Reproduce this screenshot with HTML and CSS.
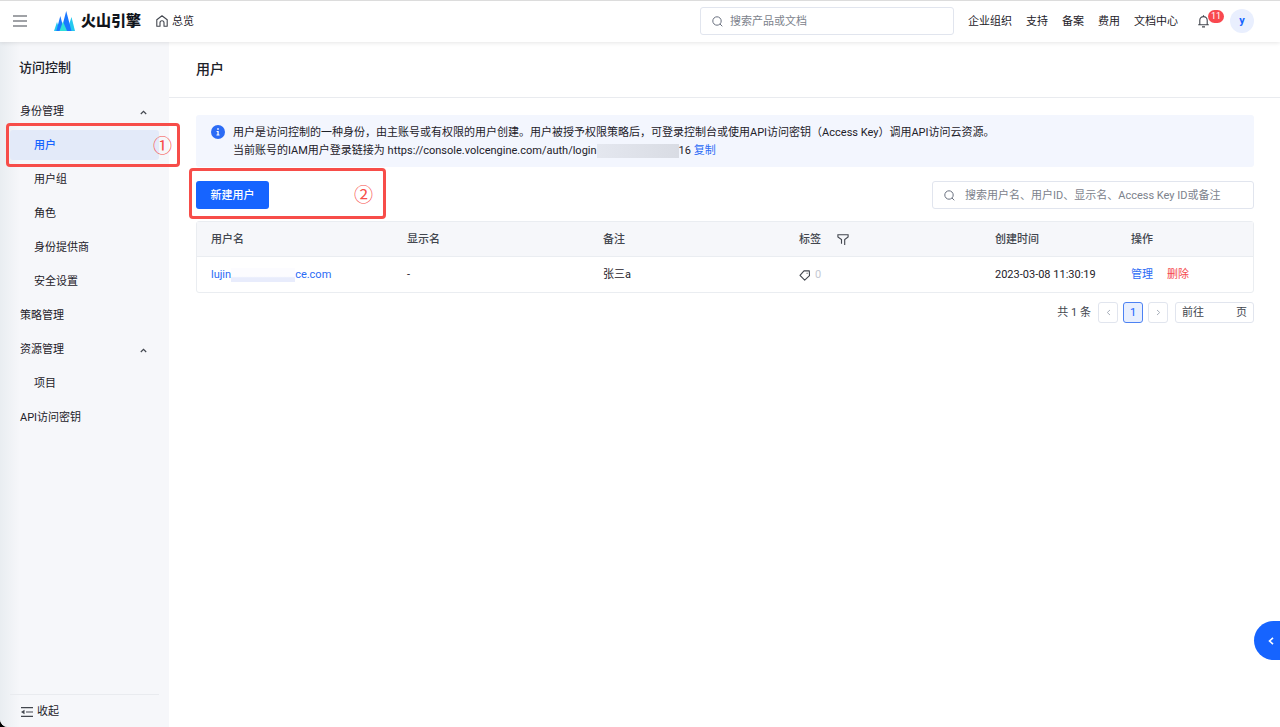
FILE: index.html
```html
<!DOCTYPE html>
<html lang="zh-CN">
<head>
<meta charset="utf-8">
<title>访问控制 - 用户</title>
<link rel="stylesheet" href="styles.css">
</head>
<body>
<div class="app">
  <header class="topbar">
    <button class="icon-btn menu-btn" aria-label="菜单">
      <svg width="14" height="12" viewBox="0 0 14 12" stroke="#42464e" stroke-width="1.2"><path d="M0 1h14M0 6h14M0 11h14"/></svg>
    </button>
    <a class="brand" href="#">
      <svg width="21" height="20" viewBox="0 0 21 20">
        <path fill="#25c9ef" d="M3 11 0 20h6zM17.500 6 21 20h-8z"/>
        <path fill="#1a78ff" d="M6.300 5 2.300 20h8zM12.200 0 7 20h10.500z"/>
        <path fill="#30e0d8" d="M9 10.500 5.500 20h7.500z"/>
      </svg>
      <span>火山引擎</span>
    </a>
    <a class="home" href="#">
      <svg width="12" height="12" viewBox="0 0 12 12" fill="none" stroke="#42464e" stroke-width="1.1"><path d="M.8 4.700 6 .7l5.200 4v6.600H8V7.800a2 2 0 0 0-4 0v3.500H.8z" stroke-linejoin="round"/></svg>
      <span>总览</span>
    </a>
    <label class="search global-search">
      <svg width="11" height="11" viewBox="0 0 11 11" fill="none" stroke="#6b7280"><circle cx="5" cy="5" r="4.200"/><path d="m8 8 2.300 2.300"/></svg>
      <input type="text" aria-label="全局搜索" placeholder="搜索产品或文档">
    </label>
    <nav class="top-links">
      <a href="#">企业组织</a><a href="#">支持</a><a href="#">备案</a><a href="#">费用</a><a href="#">文档中心</a>
    </nav>
    <button class="icon-btn bell" aria-label="消息">
      <svg width="11" height="13" viewBox="0 0 11 13" fill="none" stroke="#42464e" stroke-width="1.1"><path d="M1.800 9.500V5.300a3.700 3.700 0 0 1 7.400 0v4.200M.2 9.700h10.600M4 11.900h3M5.500 1.600V.3"/></svg>
      <span class="badge">11</span>
    </button>
    <button class="avatar">y</button>
  </header>

  <div class="body">
    <aside class="sidebar">
      <h2 class="side-title">访问控制</h2>
      <nav class="side-nav">
        <button class="side-item group">身份管理
          <svg width="7" height="5" viewBox="0 0 7 5" fill="none" stroke="#42464e" stroke-width="1.200"><path d="m.8 4 2.700-2.700L6.200 4"/></svg>
        </button>
        <a class="side-item sub active" href="#">用户</a>
        <a class="side-item sub" href="#">用户组</a>
        <a class="side-item sub" href="#">角色</a>
        <a class="side-item sub" href="#">身份提供商</a>
        <a class="side-item sub" href="#">安全设置</a>
        <a class="side-item" href="#">策略管理</a>
        <button class="side-item group">资源管理
          <svg width="7" height="5" viewBox="0 0 7 5" fill="none" stroke="#42464e" stroke-width="1.200"><path d="m.8 4 2.700-2.700L6.200 4"/></svg>
        </button>
        <a class="side-item sub" href="#">项目</a>
        <a class="side-item" href="#">API访问密钥</a>
      </nav>
      <button class="collapse">
        <svg width="12" height="10" viewBox="0 0 12 10" fill="none" stroke="#42464e" stroke-width="1.100"><path d="M0 .6h12M5 5h7M0 9.400h12"/><path d="M0 5l3.500-2.200v4.400z" fill="#42464e" stroke="none"/></svg>
        收起
      </button>
      <div class="mark mark-nav">①</div>
    </aside>

    <main class="main">
      <h1 class="page-title">用户</h1>
      <div class="content">
        <section class="notice">
          <svg width="14" height="14" viewBox="0 0 14 14"><circle cx="7" cy="7" r="7" fill="#2b6bf5"/><path d="M6.200 3.200h1.600v1.500H6.200zM5.600 5.900h2.100v3.600h.8v1h-3v-1h.9V6.900h-.8z" fill="#fff"/></svg>
          <div>
            <p>用户是访问控制的一种身份，由主账号或有权限的用户创建。用户被授予权限策略后，可登录控制台或使用API访问密钥（Access Key）调用API访问云资源。</p>
            <p>当前账号的IAM用户登录链接为 https://console.volcengine.com/auth/login<span class="mask mask-url"></span>16 <a href="#">复制</a></p>
          </div>
        </section>
        <div class="toolbar">
          <button class="primary">新建用户</button>
          <label class="search user-search">
            <svg width="11" height="11" viewBox="0 0 11 11" fill="none" stroke="#6b7280"><circle cx="5" cy="5" r="4.200"/><path d="m8 8 2.300 2.300"/></svg>
            <input type="text" aria-label="搜索用户" placeholder="搜索用户名、用户ID、显示名、Access Key ID或备注">
          </label>
          <div class="mark mark-create">②</div>
        </div>
        <table class="users">
          <colgroup><col class="wide"><col class="wide"><col class="wide"><col class="wide"><col class="date"><col></colgroup>
          <thead>
            <tr>
              <th>用户名</th><th>显示名</th><th>备注</th>
              <th><span class="cell">标签
                <svg class="filter" width="12" height="11" viewBox="0 0 12 11" fill="none" stroke="#42464e" stroke-width="1.100"><path d="M4.500 9.800V5.600L.9 3V.8h10.200V3L7.700 5.600V11"/></svg></span></th>
              <th>创建时间</th><th>操作</th>
            </tr>
          </thead>
          <tbody>
            <tr>
              <td><a href="#">lujin<span class="mask mask-name"></span>ce.com</a></td>
              <td>-</td><td>张三a</td>
              <td><span class="cell tag"><svg width="12" height="11" viewBox="0 0 12 11" fill="none" stroke="#42464e" stroke-width="1.100" stroke-linejoin="round"><path d="M5 .9 10.300.7 10.500 5.700 5.700 10.200 1 5.400z"/><path d="M7.600 3.200h1"/></svg>0</span></td>
              <td>2023-03-08 11:30:19</td>
              <td><span class="actions"><a href="#">管理</a><a class="danger" href="#">删除</a></span></td>
            </tr>
          </tbody>
        </table>
        <div class="pager">
          <span class="total">共 1 条</span>
          <button aria-label="上一页"><svg width="5" height="7" viewBox="0 0 5 7" fill="none" stroke="#a9b0bb"><path d="M4 1 1.300 3.500 4 6"/></svg></button>
          <button class="current">1</button>
          <button aria-label="下一页"><svg width="5" height="7" viewBox="0 0 5 7" fill="none" stroke="#a9b0bb"><path d="M1 1l2.700 2.500L1 6"/></svg></button>
          <label class="jump">前往<input type="text" aria-label="页码">页</label>
        </div>
      </div>
    </main>
  </div>
  <button class="drawer" aria-label="展开"><svg width="6" height="8" viewBox="0 0 6 8" fill="none" stroke="#fff" stroke-width="1.600"><path d="M5 .8 1.500 4 5 7.200"/></svg></button>
</div>
</body>
</html>
```

FILE: styles.css
```css
* { box-sizing: border-box; }
html { background: #000; }
body {
  margin: 0;
  font: 11px/18px Roboto, "Noto Sans CJK SC", sans-serif;
  color: #1d2129;
}
a { color: #2b6bf5; text-decoration: none; }
h1, h2, p { margin: 0; }
button, input { font: inherit; color: inherit; }
button { padding: 0; border: 0; background: none; cursor: pointer; }
svg { display: block; flex: none; }

.app {
  position: relative;
  display: flex;
  flex-direction: column;
  min-height: 100vh;
  background: #fff;
  border-bottom-left-radius: 8px;
  overflow: hidden;
}

.topbar {
  position: relative;
  z-index: 1;
  display: flex;
  align-items: center;
  height: 42px;
  padding: 0 26px 1px 13px;
  border-top: 1px solid #dcdcdc;
  background: #fff;
  box-shadow: 0 1px 4px rgba(0, 0, 0, .1);
}
.topbar a { color: #1d2129; }
.icon-btn { display: flex; }
.topbar .brand {
  display: flex;
  align-items: center;
  gap: 6px;
  margin-left: 27px;
  color: #11151c;
  font-size: 15px;
  font-weight: 900;
}
.home { display: flex; align-items: center; gap: 4px; margin-left: 15px; }
.home span, .top-links { padding-top: 1px; }

.search {
  display: flex;
  align-items: center;
  height: 28px;
  padding: 0 11px;
  border: 1px solid #e1e5ee;
  border-radius: 3px;
  background: #fff;
}
.search input {
  flex: 1;
  min-width: 0;
  padding: 1px 0 0;
  border: 0;
  outline: 0;
  background: none;
}
.search input::placeholder { color: #7c828c; opacity: 1; }
.global-search { width: 254px; gap: 7px; margin-left: auto; }
.top-links { display: flex; gap: 14px; margin-left: 14px; }
.bell { position: relative; margin-left: 20px; }
.badge {
  position: absolute;
  left: 10px;
  top: -5px;
  width: 16px;
  height: 13px;
  border-radius: 7px;
  background: #f9484f;
  color: #fff;
  font-size: 9px;
  line-height: 13px;
}
.avatar {
  width: 24px;
  height: 24px;
  margin-left: 21px;
  border-radius: 50%;
  background: #e9effe;
  color: #1664ff;
  font-weight: 700;
}

.body { flex: 1; display: flex; }
.sidebar {
  position: relative;
  flex: none;
  display: flex;
  flex-direction: column;
  width: 169px;
  padding: 0 10px;
  background: linear-gradient(90deg, #e9edf1, #f6f7fa 20px);
}
.side-title {
  padding: 16px 9px 18px;
  font-size: 13px;
  font-weight: 500;
  line-height: 20px;
}
.side-nav { flex: 1; display: flex; flex-direction: column; gap: 4px; }
.side-item {
  display: flex;
  align-items: center;
  justify-content: space-between;
  height: 30px;
  padding: 2px 12px 0 10px;
  border-radius: 3px;
  color: #1d2129;
}
.side-item.sub { padding-left: 24px; }
.side-item.active { background: #e3eaf9; color: #1664ff; font-weight: 500; }
.collapse {
  display: flex;
  align-items: center;
  gap: 4px;
  height: 33px;
  padding: 2px 0 0 11px;
  border-top: 1px solid #e9ebef;
}

.mark {
  position: absolute;
  display: flex;
  align-items: center;
  justify-content: flex-end;
  border: 3px solid #f74d49;
  border-radius: 4px;
  color: #f74d49;
  font-family: "Noto Sans CJK SC", sans-serif;
  font-size: 19px;
  pointer-events: none;
}
.mark-nav { left: 6px; top: 81px; width: 174px; height: 44px; padding-right: 5px; z-index: 1; }
.mark-create { left: -7px; top: -13px; width: 197px; height: 51px; padding-right: 10px; }

.main { flex: 1; min-width: 0; }
.page-title {
  height: 56px;
  padding: 0 27px;
  border-bottom: 1px solid #e9ebef;
  font-size: 14px;
  font-weight: 500;
  line-height: 54px;
}
.content { padding: 17px 26px 0 27px; }
.notice {
  display: flex;
  gap: 8px;
  padding: 9px 15px 7px;
  border-radius: 3px;
  background: #f3f6fe;
}
.notice svg { margin-top: 1px; }
.notice p { line-height: 18px; }
.mask { display: inline-block; vertical-align: middle; }
.mask-url { width: 82px; height: 14px; background: linear-gradient(90deg, #e4e7ef, #d9dce4); }
.mask-name { width: 64px; height: 14px; background: linear-gradient(#fcfcff 60%, #e8ecfc 70%); }

.toolbar {
  position: relative;
  display: flex;
  align-items: center;
  justify-content: space-between;
  margin: 14px 0 12px;
}
.primary {
  width: 73px;
  height: 28px;
  padding-top: 1px;
  border-radius: 3px;
  background: #1664ff;
  color: #fff;
  font-weight: 500;
}
.user-search { width: 322px; gap: 10px; }

.users {
  width: 100%;
  table-layout: fixed;
  border: 1px solid #eaedf1;
  border-radius: 3px;
  border-spacing: 0;
}
.wide { width: 196px; }
.date { width: 136px; }
.users th, .users td { height: 35px; padding: 1px 0 0 14px; text-align: left; white-space: nowrap; }
.users th { background: #f6f7fa; border-bottom: 1px solid #eaedf1; color: #42464e; font-weight: 500; }
.cell { display: flex; align-items: center; gap: 16px; }
.tag { gap: 4px; color: #c4c9d3; }
.actions { display: flex; gap: 14px; }
.danger { color: #f5484b; }

.pager {
  display: flex;
  align-items: center;
  justify-content: flex-end;
  gap: 5px;
  margin-top: 9px;
  color: #42464e;
}
.total { margin-right: 2px; }
.pager button, .jump {
  display: flex;
  align-items: center;
  justify-content: center;
  min-width: 20px;
  height: 21px;
  border: 1px solid #e1e5ee;
  border-radius: 3px;
}
.pager .current { border-color: #4d82f3; background: #e8effe; color: #1664ff; }
.jump { margin-left: 2px; padding: 0 6px; }
.jump input { width: 32px; padding: 0; border: 0; outline: 0; background: none; }

.drawer {
  position: absolute;
  right: 0;
  bottom: 67px;
  display: flex;
  align-items: center;
  justify-content: center;
  width: 26px;
  height: 39px;
  padding-left: 8px;
  border-radius: 20px 0 0 20px;
  background: #1664ff;
}
```
